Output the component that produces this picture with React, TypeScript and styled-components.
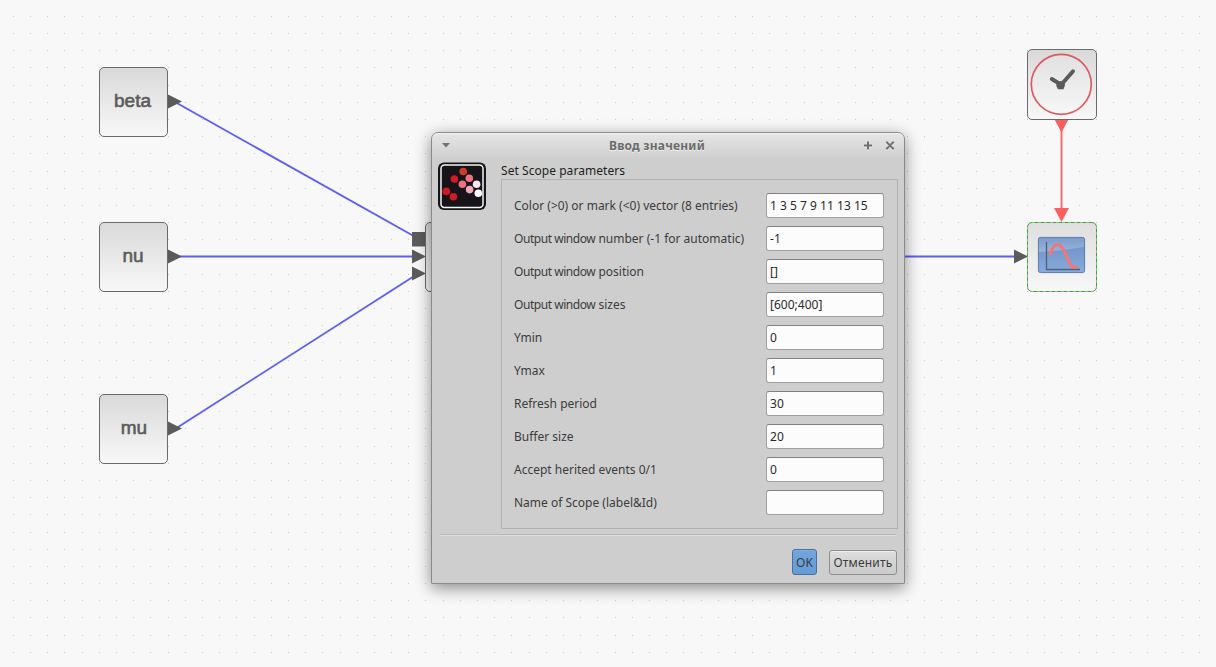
import React from "react";
import styled, { createGlobalStyle } from "styled-components";

const GlobalStyle = createGlobalStyle`
  body { margin: 0; background: #f8f8f8; overflow: hidden; }
  * { box-sizing: border-box; }
`;

const Canvas = styled.main`
  position: relative;
  width: 1216px;
  height: 667px;
  overflow: hidden;
  background: #f8f8f8;
  font-family: "Noto Sans", sans-serif;
`;

const Diagram = styled.svg`
  position: absolute;
  inset: 0;
  display: block;
`;

const Block = styled.div<{ $x: number; $y: number; $selected?: boolean; $w?: number }>`
  position: absolute;
  left: ${(p) => p.$x}px;
  top: ${(p) => p.$y}px;
  width: ${(p) => p.$w ?? 69}px;
  height: ${(p) => (p.$w ?? 69) + (p.$selected ? 0 : 1)}px;
  display: flex;
  align-items: center;
  justify-content: center;
  padding-bottom: 3px;
  border: 1px solid ${(p) => (p.$selected ? "transparent" : "#6a6a6a")};
  border-radius: 5px;
  background: linear-gradient(${(p) => (p.$selected ? "#dedede" : "#d9d9d9")}, #f8f8f8) border-box;
  color: #5b5b5b;
  font: 19px "Liberation Sans", sans-serif;
  -webkit-text-stroke: 0.6px #5b5b5b;
`;

const BlockName = styled.span<{ $shift?: number }>`
  margin-left: ${(p) => p.$shift ?? 0}px;
`;

const Dialog = styled.section`
  position: absolute;
  left: 431px;
  top: 132px;
  width: 474px;
  height: 452px;
  display: flex;
  flex-direction: column;
  border: 1px solid #8b8b8b;
  border-radius: 7px 7px 0 0;
  background: linear-gradient(#e6e6e6, #cecece 27px, #cecece);
  box-shadow: 0 4px 16px rgba(0, 0, 0, 0.45), inset 0 1px 0 #f3f3f3;
  color: #3c3c3c;
  font-size: 12px;
`;

const TitleBar = styled.header`
  display: grid;
  grid-template-columns: 27px 1fr 49px;
  align-items: center;
  height: 25px;
  padding-bottom: 2px;
  flex: none;
`;

const Title = styled.h1`
  margin: 0;
  text-align: center;
  font-size: 12px;
  letter-spacing: 0.22px;
  line-height: 23px;
  font-weight: bold;
  color: #6b6b6b;
  text-shadow: 0 1px 0 #eee;
`;

const MenuGlyph = styled.svg`
  display: block;
  margin-left: 9px;
`;

const WindowControls = styled.svg`
  display: block;
`;

const Content = styled.div`
  display: flex;
  height: 371px;
  padding: 4px 6px 0 5px;
`;

const IconColumn = styled.div`
  width: 64px;
  flex: none;
`;

const AppIcon = styled.svg`
  display: block;
`;

const FormColumn = styled.div`
  flex: 1;
`;

const FormCaption = styled.div`
  height: 17px;
  line-height: 17px;
  letter-spacing: 0.05px;
  color: #1e1e1e;
  white-space: nowrap;
`;

const FormPanel = styled.div`
  height: 350px;
  padding: 13px 13px 0 12px;
  border: 1px solid #b2b2b2;
  display: flex;
  flex-direction: column;
  gap: 8px;
`;

const Field = styled.label`
  display: flex;
  align-items: center;
  justify-content: space-between;
  height: 25px;
  white-space: nowrap;
`;

const LabelText = styled.span`
  white-space: pre;
`;

const TightWords = styled.span`
  letter-spacing: -0.45px;
`;

const FieldInput = styled.input`
  width: 118px;
  height: 25px;
  padding: 0 3px;
  border: 1px solid #a0a0a0;
  border-top-color: #828282;
  border-radius: 3px;
  background: #fcfcfc;
  color: #2a2a2a;
  font: 12px "Noto Sans", sans-serif;
  letter-spacing: 0.02px;
  outline: none;
`;

const Footer = styled.footer`
  display: flex;
  justify-content: flex-end;
  align-items: flex-start;
  gap: 12px;
  margin: 5px 8px 0;
  padding-top: 15px;
  border-top: 1px solid #b8b8b8;
  box-shadow: inset 0 1px 0 #dedede;
`;

const Button = styled.button<{ $primary?: boolean }>`
  width: ${(p) => (p.$primary ? 25 : 68)}px;
  height: ${(p) => (p.$primary ? 26 : 25)}px;
  margin: ${(p) => (p.$primary ? "-1px 0 0" : "0 -1px 0 0")};
  padding: 0;
  display: flex;
  align-items: center;
  justify-content: center;
  border: 1px solid ${(p) => (p.$primary ? "#47719f" : "#8f8f8f")};
  border-radius: 3px;
  background: ${(p) => (p.$primary ? "linear-gradient(#72a5dd, #649bd7)" : "linear-gradient(#dedede, #cacaca)")};
  box-shadow: inset 0 1px 0 ${(p) => (p.$primary ? "#7fade0" : "#ededed")};
  color: #3c3c3c;
  font: 12px "Noto Sans", sans-serif;
  letter-spacing: ${(p) => (p.$primary ? 0 : 0.2)}px;
  white-space: nowrap;
`;

const fields: [string, string][] = [
  ["Color (>0) or mark (<0) vector (8 entries)", "1 3 5 7 9 11 13 15"],
  ["Output window number (-1 for automatic)", "-1"],
  ["Output window position", "[]"],
  ["Output window sizes", "[600;400]"],
  ["Ymin", "0"],
  ["Ymax", "1"],
  ["Refresh period", "30"],
  ["Buffer size", "20"],
  ["Accept herited events 0/1", "0"],
  ["Name of Scope (label&Id)", ""],
];

const WINDOW_PREFIX = "Output window";

const FieldLabel = ({ text }: { text: string }) =>
  text.startsWith(WINDOW_PREFIX) ? (
    <LabelText>
      <TightWords>{WINDOW_PREFIX}</TightWords>
      {text.slice(WINDOW_PREFIX.length)}
    </LabelText>
  ) : (
    <LabelText>{text}</LabelText>
  );

const iconDots: [number, number, string][] = [
  [25.2, 9.5, "#cf3d25"],
  [16.4, 17, "#d31a28"],
  [31.3, 16.3, "#ec7281"],
  [24.4, 22.2, "#ec7281"],
  [38.6, 22.2, "#fbe6ec"],
  [31.6, 27.6, "#f3a9b8"],
  [8.3, 29.4, "#d01722"],
  [40.3, 31.2, "#ffffff"],
  [15.4, 34.8, "#d31a28"],
];

const PITCH = 17.19;
const gridDots: [number, number][] = [];
for (let row = -1; row < 39; row++) {
  for (let col = -1; col < 71; col++) {
    gridDots.push([Math.floor(13.4 + col * PITCH), Math.floor(16.3 + row * PITCH)]);
  }
}

const Grid = () => (
  <g fill="#c9c9c9" shapeRendering="crispEdges">
    {gridDots.map(([x, y]) => (
      <rect key={`${x}-${y}`} x={x} y={y} width="1" height="1" />
    ))}
  </g>
);

const Wires = () => (
  <Diagram width="1216" height="667" viewBox="0 0 1216 667">
    <Grid />
    <g stroke="#5d5df5" strokeWidth="1.8" fill="none">
      <path d="M175 102 L419 239" />
      <path d="M175 256.5 H415" />
      <path d="M175 429 L419 273" />
      <path d="M900 256.5 H1018" />
    </g>
    <path d="M1061.5 125 V214" stroke="#fa6060" strokeWidth="1.8" />
    <g fill="#5b5b5b">
      <path d="M168 94.5 L182 101.5 L168 108.5Z" />
      <path d="M168 249.5 L182 256.5 L168 263.5Z" />
      <path d="M168 421.5 L182 428.5 L168 435.5Z" />
      <rect x="412" y="232" width="14" height="14.5" />
      <path d="M412 249.5 L426 256.5 L412 263.5Z" />
      <path d="M412 266.5 L426 273.5 L412 280.5Z" />
      <path d="M1014 249.5 L1028 256.5 L1014 263.5Z" />
    </g>
    <g fill="#fa6060">
      <path d="M1054 118.5 H1069 L1061.5 132.5Z" />
      <path d="M1054 208 H1069 L1061.5 222Z" />
    </g>
  </Diagram>
);

const ClockFace = () => (
  <Diagram width="68" height="69" viewBox="0 0 68 69">
    <circle cx="33.3" cy="34.3" r="30" fill="#fff" fillOpacity=".16" stroke="#dd5a5e" strokeWidth="1.7" />
    <g stroke="#5b5b5b" strokeLinecap="round" fill="none">
      <path d="M23.8 29 L32 34" strokeWidth="4" />
      <path d="M33 35 L45 21.3" strokeWidth="4" />
    </g>
    <path d="M28.5 31.5 L36 31 L37 35 L35.5 39.2 H30 L28.3 36Z" fill="#5b5b5b" />
  </Diagram>
);

const ScopeFace = () => (
  <Diagram width="68" height="68" viewBox="0 0 68 68" overflow="visible">
    <defs>
      <linearGradient id="screen" x1="0" y1="0" x2="0" y2="1">
        <stop offset="0" stopColor="#6b8ec3" />
        <stop offset="1" stopColor="#88abdd" />
      </linearGradient>
      <linearGradient id="gloss" x1="0" y1="0" x2="0" y2="1">
        <stop offset="0" stopColor="#fff" stopOpacity=".12" />
        <stop offset="1" stopColor="#fff" stopOpacity=".25" />
      </linearGradient>
    </defs>
    <rect x="-.5" y="-.5" width="69" height="69" rx="4.5" fill="none" stroke="#777" />
    <rect x="-.5" y="-.5" width="69" height="69" rx="4.5" fill="none" stroke="#45ee45" strokeDasharray="3 3" />
    <rect x="10.4" y="14.4" width="46.2" height="35.2" rx="2" fill="url(#screen)" stroke="#5c7baa" />
    <path d="M11 15 H56 V24 Q34 28 11 29Z" fill="url(#gloss)" />
    <path d="M18.5 19 V46.5 H52" fill="none" stroke="#565f70" strokeWidth="1.3" />
    <path d="M22.3 31.3 C25.5 20 31 19.5 34.8 25.5 C40.5 34.5 42 47 48.5 43.8" fill="none" stroke="#f47778" strokeWidth="3" strokeLinecap="round" />
  </Diagram>
);

export default function App() {
  return (
    <Canvas>
      <GlobalStyle />
      <Wires />
      <Block $x={99} $y={67}><BlockName $shift={-2}>beta</BlockName></Block>
      <Block $x={99} $y={222}><BlockName $shift={-1}>nu</BlockName></Block>
      <Block $x={99} $y={394}><BlockName $shift={1}>mu</BlockName></Block>
      <Block $x={425} $y={222} />
      <Block $x={1027} $y={49} $w={70}><ClockFace /></Block>
      <Block $x={1027} $y={222} $w={70} $selected><ScopeFace /></Block>

      <Dialog>
        <TitleBar>
          <MenuGlyph width="12" height="10" viewBox="0 0 12 10">
            <path d="M1 3 H9 L5 7.5Z" fill="#717171" />
          </MenuGlyph>
          <Title>Ввод значений</Title>
          <WindowControls width="49" height="24" viewBox="0 0 49 24">
            <path d="M9 13.5 H17 M13 9.5 V17.5 M31.3 9.8 L38.7 17.2 M38.7 9.8 L31.3 17.2" stroke="#f1f1f1" strokeWidth="2" />
            <path d="M9 12.5 H17 M13 8.5 V16.5 M31.3 8.8 L38.7 16.2 M38.7 8.8 L31.3 16.2" stroke="#717171" strokeWidth="2" />
          </WindowControls>
        </TitleBar>
        <Content>
          <IconColumn>
            <AppIcon width="50" height="49" viewBox="0 0 50 49">
              <rect x="1" y="0.5" width="48" height="47.5" rx="6" fill="#171419" />
              <rect x="4" y="3" width="42" height="42.5" rx="3.5" fill="none" stroke="#f5f5f5" strokeWidth="1.5" />
              {iconDots.map(([x, y, color]) => (
                <circle key={`${x}-${y}`} cx={x + 1} cy={y} r="3.8" fill={color} />
              ))}
            </AppIcon>
          </IconColumn>
          <FormColumn>
            <FormCaption>Set Scope parameters</FormCaption>
            <FormPanel>
              {fields.map(([label, value]) => (
                <Field key={label}>
                  <FieldLabel text={label} />
                  <FieldInput defaultValue={value} />
                </Field>
              ))}
            </FormPanel>
          </FormColumn>
        </Content>
        <Footer>
          <Button $primary>OK</Button>
          <Button>Отменить</Button>
        </Footer>
      </Dialog>
    </Canvas>
  );
}
